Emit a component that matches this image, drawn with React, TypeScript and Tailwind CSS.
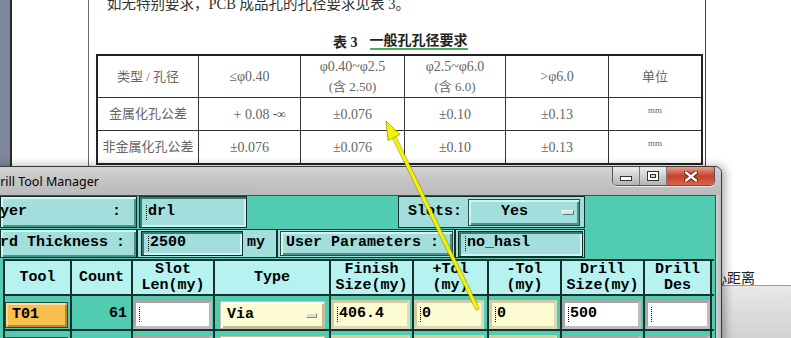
import React from "react";

const RAISED = "shadow-[inset_2px_2px_0_#d4f4f2,inset_-2px_-2px_0_#4e8f88]";
const SUNKEN = "shadow-[inset_2px_2px_0_#3c7770,inset_-2px_-2px_0_#d4f4f2]";
const MONO = "font-['Liberation_Mono','DejaVu_Sans_Mono',monospace] font-bold text-[15px] text-black";
const CJK = "font-['Liberation_Serif','Noto_Sans_CJK_SC',serif]";

function Cursor() {
  return <span className="inline-block h-[15px] w-0 border-l border-dotted border-black mr-[1px] align-middle" />;
}

function Document() {
  const cell = "flex items-center justify-center border-l border-[#333] text-[#666]";
  const num = "text-[14px]";
  const widths = ["w-[100px]", "w-[102px]", "w-[104px]", "w-[101px]", "w-[103px]", "flex-1"];
  return (
    <div className="flex flex-col w-full h-full">
      <div className="flex h-[167px]">
        <div className="w-[10px] bg-[#7e869c]" />
        <div className="w-[2px] bg-[#2a2a2a]" />
        <div className="w-[76px]" />
        <div className="w-px bg-[#6a6a6a]" />
        <div className="w-[616px] flex flex-col">
          <div className={`mt-[-3px] pl-[18px] h-[14px] leading-[14px] text-[14.5px] text-[#333] whitespace-pre ${CJK}`}>
            如无特别要求，PCB 成品孔的孔径要求见表 3。
          </div>
          <div className={`mt-[23px] pl-[244px] h-[16px] flex items-center gap-[12px] text-[14px] font-bold text-[#222] ${CJK}`}>
            <span>表 3</span>
            <span className="border-b-2 border-[#4fae5a] leading-[14px]">一般孔孔径要求</span>
          </div>
          <div className={`mt-[4px] ml-[7px] w-[607px] border-2 border-[#222] text-[13px] ${CJK}`}>
            <div className="flex h-[42px] border-b border-[#333]">
              <div className={`${widths[0]} ${cell} border-l-0`}>类型 / 孔径</div>
              <div className={`${widths[1]} ${cell} ${num}`}>≤φ0.40</div>
              <div className={`${widths[2]} ${cell} flex-col leading-[20px]`}><span className={num}>φ0.40~φ2.5</span><span>(含 2.50)</span></div>
              <div className={`${widths[3]} ${cell} flex-col leading-[20px]`}><span className={num}>φ2.5~φ6.0</span><span>(含 6.0)</span></div>
              <div className={`${widths[4]} ${cell} ${num}`}>&gt;φ6.0</div>
              <div className={`${widths[5]} ${cell}`}>单位</div>
            </div>
            <div className="flex h-[33px] border-b border-[#333]">
              <div className={`${widths[0]} ${cell} border-l-0`}>金属化孔公差</div>
              <div className={`${widths[1]} ${cell} ${num} pl-[20px]`}><span className="whitespace-pre">+ 0.08 </span><span className="text-[12px] font-bold text-[#444]">-∞</span></div>
              <div className={`${widths[2]} ${cell} ${num}`}>±0.076</div>
              <div className={`${widths[3]} ${cell} ${num}`}>±0.10</div>
              <div className={`${widths[4]} ${cell} ${num}`}>±0.13</div>
              <div className={`${widths[5]} ${cell} items-start pt-[6px] text-[9px]`}>mm</div>
            </div>
            <div className="flex h-[32px]">
              <div className={`${widths[0]} ${cell} border-l-0`}>非金属化孔公差</div>
              <div className={`${widths[1]} ${cell} ${num}`}>±0.076</div>
              <div className={`${widths[2]} ${cell} ${num}`}>±0.076</div>
              <div className={`${widths[3]} ${cell} ${num}`}>±0.10</div>
              <div className={`${widths[4]} ${cell} ${num}`}>±0.13</div>
              <div className={`${widths[5]} ${cell} items-start pt-[6px] text-[9px]`}>mm</div>
            </div>
          </div>
        </div>
        <div className="w-px bg-[#444]" />
        <div className="flex-1" />
      </div>
      <div className="flex flex-col flex-1">
        <div className="pt-[102px] pl-[713px] h-[118px] text-[14px] leading-[16px] text-[#222] font-['Noto_Sans_CJK_SC',sans-serif]">
          心距离
        </div>
        <div className="flex-1 border-t border-[#9c9c9c] bg-gradient-to-b from-[#e8e8e8] to-[#d2d2d2]" />
      </div>
    </div>
  );
}

function LabelBox({ text, shift, pr }: { text: string; shift: string; pr: string }) {
  return (
    <div className={`h-full w-[137px] border border-[#10302c] bg-[#a2dedb] ${RAISED} flex items-center justify-between overflow-hidden ${MONO}`}>
      <span className={`whitespace-pre ${shift}`}>{text}</span>
      <span className={pr}>:</span>
    </div>
  );
}

function CyanField({ w, h, value, ml }: { w: string; h: string; value: string; ml?: string }) {
  return (
    <div className={`${w} ${h} ${ml ?? ""} border border-[#10302c] bg-[#a2dedb] ${SUNKEN} flex items-center pl-[6px] ${MONO}`}>
      <Cursor />
      <span>{value}</span>
    </div>
  );
}

function Field({ w, value, kind }: { w: string; value: string; kind: "white" | "yellow" }) {
  const bg =
    kind === "white"
      ? "bg-white border-[#bdbdbd] border-t-[#a6a6a6] border-l-[#a6a6a6]"
      : "bg-[#fdfbd2] border-[#dddbb8] border-t-[#cfcca6] border-l-[#cfcca6]";
  return (
    <div className={`${w} h-[29px] border-[3px] ${bg} flex items-center pl-[3px] ${MONO}`}>
      <Cursor />
      <span>{value}</span>
    </div>
  );
}

function HeaderCell({ w, lines, last }: { w: string; lines: string[]; last?: boolean }) {
  return (
    <div className={`${w} h-full border-l-2 ${last ? "border-r-2" : ""} border-[#17302c] bg-[#b6f2f0] flex flex-col items-center justify-center leading-[16px] ${MONO}`}>
      {lines.map((l) => (
        <span key={l} className="whitespace-pre">{l}</span>
      ))}
    </div>
  );
}

function DataRow({ tool, count, toolBg, vals }: { tool: string; count: string; toolBg: string; vals: string[] }) {
  const c = "h-full border-l-2 border-[#17302c] pt-[4px]";
  return (
    <div className="flex h-[35px] border-b-2 border-[#17302c]">
      <div className={`w-[67px] ${c} pt-[6px]`}>
        <div className={`w-[63px] h-[26px] border border-[#2a4a44] ${toolBg} shadow-[inset_2px_2px_0_rgba(255,255,255,0.45),inset_-2px_-2px_0_rgba(0,0,0,0.28)] flex items-center pl-[6px] ${MONO}`}>
          {tool}
        </div>
      </div>
      <div className={`w-[61px] ${c} flex items-center justify-end pr-[4px] pt-0 ${MONO}`}>{count}</div>
      <div className={`w-[82px] ${c}`}><Field w="w-[79px]" value={vals[0]} kind="white" /></div>
      <div className={`w-[116px] ${c} pl-[5px] pt-[5px]`}>
        <div className={`w-[105px] h-[28px] border border-[#c4c2a0] bg-[#fdfbd2] shadow-[inset_2px_2px_0_#ffffff,inset_-2px_-2px_0_#bebb96] flex items-center justify-between pl-[6px] pr-[7px] ${MONO}`}>
          <span>{vals[1]}</span>
          <span className="w-[11px] h-[5px] bg-[#dcdcdc] border border-[#8a8a8a] border-t-white border-l-white" />
        </div>
      </div>
      <div className={`w-[83px] ${c}`}><Field w="w-[79px]" value={vals[2]} kind="yellow" /></div>
      <div className={`w-[75px] ${c}`}><Field w="w-[70px]" value={vals[3]} kind="yellow" /></div>
      <div className={`w-[73px] ${c}`}><Field w="w-[68px]" value={vals[4]} kind="yellow" /></div>
      <div className={`w-[83px] ${c}`}><Field w="w-[79px]" value={vals[5]} kind="white" /></div>
      <div className={`w-[69px] ${c} border-r-2`}><Field w="w-[65px]" value={vals[6]} kind="white" /></div>
    </div>
  );
}

function Window() {
  return (
    <div className="absolute left-[-8px] top-[166px] w-[730px] h-[190px] border border-[#3b3b3b] rounded-t-[7px] bg-[#c4c4c4] shadow-[3px_0_10px_rgba(0,0,0,0.35)] flex flex-col">
      <div className="relative h-[28px] shrink-0 rounded-t-[6px] bg-gradient-to-b from-[#d4d4d4] via-[#c4c4c4] to-[#bababa] flex items-center">
        <span className="ml-[-2px] mt-[2px] text-[12.5px] text-black font-['Noto_Sans',sans-serif]">Drill Tool Manager</span>
        <div className="absolute right-[6px] top-0 flex h-[19px] rounded-b-[5px] overflow-hidden border border-t-0 border-[#555] shadow-[0_1px_0_rgba(255,255,255,0.7)]">
          <div className="w-[27px] bg-gradient-to-b from-[#eeeeee] via-[#d0d0d0] to-[#b4b4b4] border-r border-[#777] flex items-center justify-center">
            <div className="w-[12px] h-[5px] mt-[5px] bg-white border border-[#333]" />
          </div>
          <div className="w-[27px] bg-gradient-to-b from-[#eeeeee] via-[#d0d0d0] to-[#b4b4b4] border-r border-[#777] flex items-center justify-center">
            <div className="w-[12px] h-[10px] bg-white border border-[#333] flex items-center justify-center">
              <div className="w-[6px] h-[4px] border border-[#333] bg-[#d8d8d8]" />
            </div>
          </div>
          <div className="w-[47px] bg-gradient-to-b from-[#e79a88] via-[#c9402a] to-[#d8644a] flex items-center justify-center">
            <svg width="14" height="11" viewBox="0 0 14 11">
              <path d="M2 1.5 L12 9.5 M12 1.5 L2 9.5" stroke="#5a1a10" strokeWidth="4.2" strokeLinecap="round" />
              <path d="M2 1.5 L12 9.5 M12 1.5 L2 9.5" stroke="#ffffff" strokeWidth="2.4" strokeLinecap="round" />
            </svg>
          </div>
        </div>
      </div>
      <div className="flex flex-1 min-h-0">
        <div className="w-[7px]" />
        <div className="w-[715px] bg-[#52ccb0] border-t border-[#2a5650] flex flex-col overflow-hidden">
          <div className="flex h-[32px] shrink-0">
            <LabelBox text="Layer" shift="ml-[-19px]" pr="pr-[15px]" />
            <CyanField w="w-[108px]" h="h-full" value="drl" ml="ml-[2px]" />
            <div className="w-[151px]" />
            <div className={`w-[187px] h-full border border-[#10302c] bg-[#a2dedb] flex items-center ${MONO}`}>
              <span className="pl-[9px]">Slots:</span>
              <div className={`ml-auto mr-[4px] w-[112px] h-[27px] border border-[#2a4a44] bg-[#a2dedb] ${RAISED} flex items-center`}>
                <span className="pl-[32px]">Yes</span>
                <span className="ml-auto mr-[5px] w-[12px] h-[5px] bg-[#cde8e6] border border-[#4c7e78] border-t-white border-l-white" />
              </div>
            </div>
          </div>
          <div className="flex h-[29px] mt-px shrink-0">
            <LabelBox text="Board Thickness" shift="ml-[-28px]" pr="pr-[11px]" />
            <div className={`w-[140px] h-full border border-[#10302c] bg-[#a2dedb] flex items-center ${MONO}`}>
              <CyanField w="w-[102px]" h="h-[25px]" value="2500" ml="ml-[3px]" />
              <span className="ml-[4px]">my</span>
            </div>
            <div className="w-[178px] h-full border border-[#10302c] bg-[#a2dedb] flex items-center">
              <div className={`ml-[2px] w-[173px] h-[25px] border border-[#2a4a44] bg-[#a2dedb] ${RAISED} flex items-center pl-[5px] ${MONO} whitespace-pre`}>
                User Parameters :
              </div>
            </div>
            <div className="w-[130px] h-full border border-[#10302c] bg-[#a2dedb] flex items-center">
              <CyanField w="w-[125px]" h="h-[26px]" value="no_hasl" ml="ml-[2px]" />
            </div>
          </div>
          <div className="ml-[3px] w-[711px] mt-px flex flex-col">
            <div className="flex h-[37px] border-y-2 border-[#17302c]">
              <HeaderCell w="w-[67px]" lines={["Tool"]} />
              <HeaderCell w="w-[61px]" lines={["Count"]} />
              <HeaderCell w="w-[82px]" lines={["Slot", "Len(my)"]} />
              <HeaderCell w="w-[116px]" lines={["Type"]} />
              <HeaderCell w="w-[83px]" lines={["Finish", "Size(my)"]} />
              <HeaderCell w="w-[75px]" lines={["+Tol", "(my)"]} />
              <HeaderCell w="w-[73px]" lines={["-Tol", "(my)"]} />
              <HeaderCell w="w-[83px]" lines={["Drill", "Size(my)"]} />
              <HeaderCell w="w-[69px]" lines={["Drill", "Des"]} last />
            </div>
            <DataRow tool="T01" count="61" toolBg="bg-[#f8bf4c]" vals={["", "Via", "406.4", "0", "0", "500", ""]} />
            <DataRow tool="T02" count="12" toolBg="bg-[#a2dedb]" vals={["", "Via", "406.4", "0", "0", "500", ""]} />
          </div>
        </div>
        <div className="w-[6px] border-l border-[#4a4a4a] bg-gradient-to-r from-[#d2d2d2] to-[#b8b8b8]" />
      </div>
    </div>
  );
}

function Arrow() {
  return (
    <svg className="absolute inset-0 pointer-events-none" width="791" height="338" viewBox="0 0 791 338">
      <line x1="477" y1="308" x2="394" y2="137" stroke="#8f8a00" strokeOpacity="0.55" strokeWidth="5" strokeLinecap="round" />
      <line x1="477" y1="308" x2="394" y2="137" stroke="#f4f400" strokeWidth="3" strokeLinecap="round" />
      <polygon points="386,121 400,134.5 388,140.5" fill="#f4f400" stroke="#9c9400" strokeWidth="0.8" strokeLinejoin="round" />
    </svg>
  );
}

export default function App() {
  return (
    <div className="relative w-[791px] h-[338px] overflow-hidden bg-white">
      <Document />
      <Window />
      <Arrow />
    </div>
  );
}
